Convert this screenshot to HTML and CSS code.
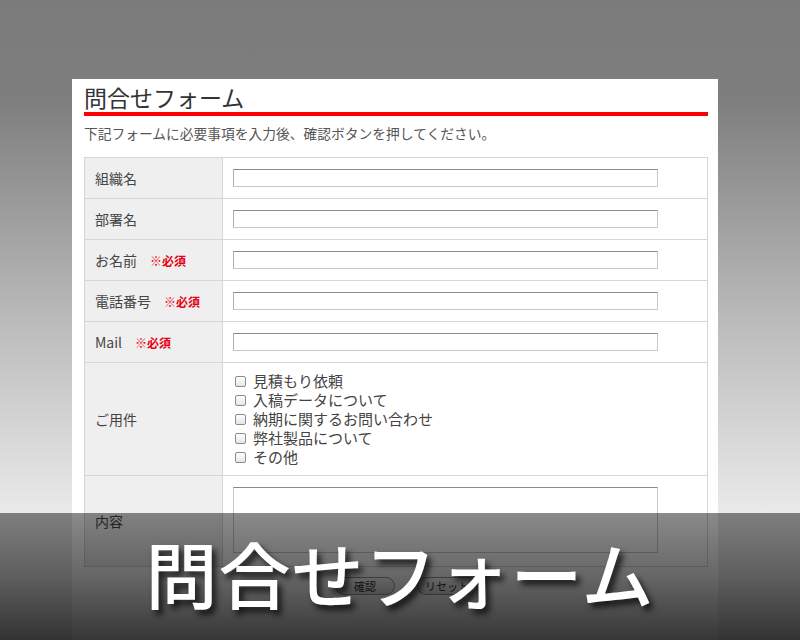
FILE: index.html
```html
<!DOCTYPE html>
<html lang="ja">
<head>
    <meta charset="UTF-8">
    <title>問合せフォーム</title>
    <link rel="stylesheet" href="styles.css">
</head>
<body>
    <div class="panel">
        <h1 class="page-title">問合せフォーム</h1>
        <p class="lead">下記フォームに必要事項を入力後、確認ボタンを押してください。</p>

        <table class="form-table">
            <tr>
                <th>組織名</th>
                <td><input type="text" class="text-field"></td>
            </tr>
            <tr>
                <th>部署名</th>
                <td><input type="text" class="text-field"></td>
            </tr>
            <tr>
                <th>お名前<span class="req">※必須</span></th>
                <td><input type="text" class="text-field"></td>
            </tr>
            <tr>
                <th>電話番号<span class="req">※必須</span></th>
                <td><input type="text" class="text-field"></td>
            </tr>
            <tr>
                <th>Mail<span class="req">※必須</span></th>
                <td><input type="text" class="text-field"></td>
            </tr>
            <tr>
                <th>ご用件</th>
                <td class="checks">
                    <label><span class="box"></span>見積もり依頼</label>
                    <label><span class="box"></span>入稿データについて</label>
                    <label><span class="box"></span>納期に関するお問い合わせ</label>
                    <label><span class="box"></span>弊社製品について</label>
                    <label><span class="box"></span>その他</label>
                </td>
            </tr>
            <tr>
                <th>内容</th>
                <td class="area-cell"><textarea class="text-area"></textarea></td>
            </tr>
        </table>

        <div class="actions">
            <button class="pill">確認</button>
            <button class="pill">リセット</button>
        </div>
    </div>

    <div class="banner">
        <span class="banner-text">問合せフォーム</span>
    </div>
</body>
</html>
```

FILE: styles.css
```css
html, body {
    height: 100%;
}

body {
    margin: 0;
    padding-top: 79px;
    box-sizing: border-box;
    overflow: hidden;
    font-family: "Noto Sans CJK JP", "Noto Sans", sans-serif;
    background: linear-gradient(to bottom, #7b7b7b 0px, #7e7e7e 100px, #bdbdbd 330px, #e9e9e9 510px, #f0f0f0 640px);
    position: relative;
}

.panel {
    margin-left: 72px;
    width: 646px;
    height: 561px;
    background-color: #fff;
    padding: 3px 10px 0 12px;
    box-sizing: border-box;
}

.page-title {
    margin: 0;
    font-size: 23px;
    font-weight: normal;
    line-height: 30px;
    color: #333;
    border-bottom: 4px solid #f00;
}

.lead {
    margin: 8px 0 14px;
    font-size: 13.75px;
    line-height: 19px;
    color: #555;
}

.form-table {
    width: 624px;
    border-collapse: collapse;
    font-size: 14px;
    color: #444;
}

.form-table th,
.form-table td {
    border: 1px solid #d6d6d6;
    height: 40px;
    padding: 0 10px;
    vertical-align: middle;
}

.form-table th {
    width: 117px;
    background-color: #efefef;
    text-align: left;
    font-weight: normal;
}

.req {
    color: #e60012;
    font-size: 12px;
    font-weight: bold;
    margin-left: 13px;
}

.text-field {
    display: block;
    width: 425px;
    height: 18px;
    margin: 0;
    padding: 0;
    box-sizing: border-box;
    border: 1px solid #c8c8c8;
    border-top-color: #8a8a8a;
    border-left-color: #b0b0b0;
    background: #fff;
}

.checks {
    padding: 8px 10px 9px 12px !important;
}

.checks label {
    display: flex;
    align-items: center;
    line-height: 19px;
    font-size: 15px;
    color: #444;
}

.box {
    width: 9px;
    height: 9px;
    border: 1px solid #8c8c8c;
    border-radius: 2px;
    background: linear-gradient(#fff, #e6e6e6);
    margin-right: 7px;
    margin-top: 2px;
}

.area-cell {
    padding: 11px 10px 13px !important;
}

.text-area {
    display: block;
    width: 425px;
    height: 66px;
    margin: 0;
    box-sizing: border-box;
    border: 1px solid #c8c8c8;
    border-top-color: #8a8a8a;
    resize: none;
}

.actions {
    display: flex;
    justify-content: center;
    gap: 22px;
    padding: 10px 0 0 20px;
}

.pill {
    width: 60px;
    height: 18px;
    border: 1px solid #999;
    border-radius: 9px;
    background: linear-gradient(#fff, #e2e2e2);
    font-family: inherit;
    font-size: 11px;
    line-height: 14px;
    color: #333;
    padding: 0;
}

.banner {
    position: absolute;
    left: 0;
    right: 0;
    top: 513px;
    height: 127px;
    background: linear-gradient(to bottom, rgba(0, 0, 0, 0.46), rgba(0, 0, 0, 0.6) 50%, rgba(0, 0, 0, 0.79));
    display: flex;
    justify-content: center;
    padding-top: 16px;
    box-sizing: border-box;
}

.banner-text {
    font-size: 72px;
    line-height: 86px;
    font-weight: 500;
    color: #fff;
    letter-spacing: 1px;
    text-shadow: 4px 5px 6px rgba(0, 0, 0, 0.75);
}
```
